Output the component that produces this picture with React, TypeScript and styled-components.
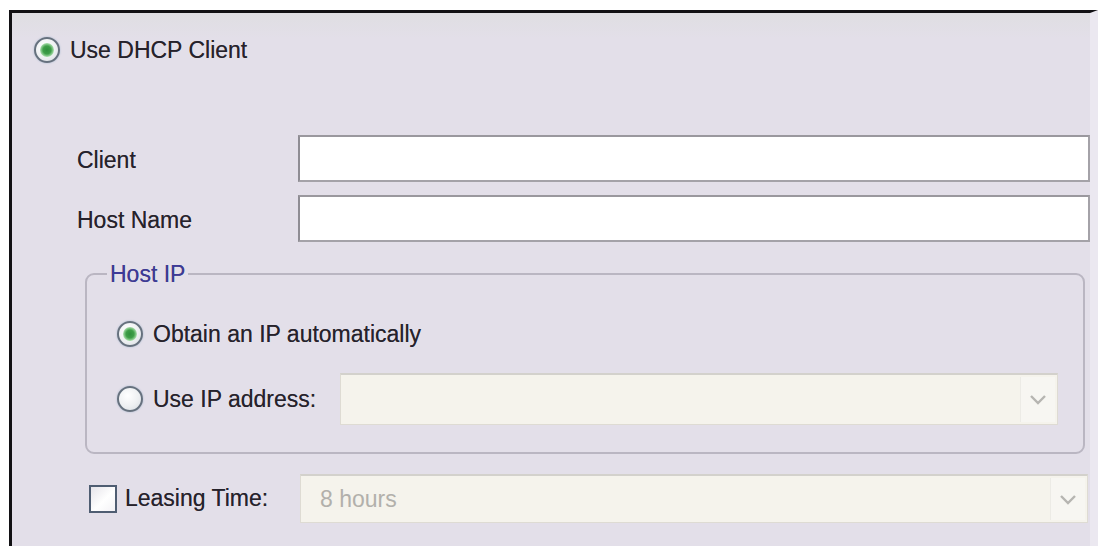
import React from 'react';
import styled, { createGlobalStyle } from 'styled-components';

const textColor = '#26222b';
const panelBackground = '#e3dfe9';
const fieldBorder = '#a4a2a8';
const disabledBackground = '#f5f3ec';

const GlobalStyle = createGlobalStyle`
  html, body {
    margin: 0;
    padding: 0;
    background: #ffffff;
    overflow: hidden;
  }
  body {
    font-family: 'Liberation Sans', Arial, sans-serif;
  }
`;

const Page = styled.div`
  height: 546px;
  padding: 10px 0 0 9px;
  box-sizing: border-box;
`;

const Panel = styled.div`
  height: 100%;
  box-sizing: border-box;
  border-top: 3px solid #121114;
  border-left: 3px solid #121114;
  border-right: 8px solid #ebe8f0;
  background: linear-gradient(#dfdee2 0, #e3dfe9 26px);
  background-color: ${panelBackground};
  display: flex;
  flex-direction: column;
  padding-top: 24px;
  font-size: 23px;
  color: ${textColor};
  text-shadow: 0 0 0.6px rgba(38, 34, 43, 0.6);
`;

const OptionRow = styled.label<{ $indent?: number }>`
  display: flex;
  align-items: center;
  gap: 10px;
  padding-left: ${(p) => p.$indent ?? 0}px;
  line-height: 26px;
`;

const Radio = styled.span<{ $checked?: boolean }>`
  position: relative;
  flex: none;
  width: 26px;
  height: 26px;
  box-sizing: border-box;
  border-radius: 50%;
  border: 2px solid #66717e;
  background: radial-gradient(circle at 40% 35%, #ffffff 0, #eef0f2 55%, #d6dbe0 100%);
  box-shadow: 0 0 2px #9fb4cc;

  &::after {
    content: '';
    display: ${(p) => (p.$checked ? 'block' : 'none')};
    position: absolute;
    left: 4px;
    top: 4px;
    width: 14px;
    height: 14px;
    border-radius: 50%;
    background: radial-gradient(circle, #2f8f3c 0, #3e9f48 40%, #bde9be 75%, #e6f7e6 100%);
  }
`;

const Fields = styled.div`
  display: grid;
  grid-template-columns: 221px 1fr;
  row-gap: 13px;
  align-items: center;
  margin-top: 72px;
  padding-left: 65px;
`;

const FieldLabel = styled.span`
  padding-top: 4px;
`;

const TextInput = styled.div`
  height: 47px;
  box-sizing: border-box;
  background: #ffffff;
  border: 2px solid ${fieldBorder};
  border-top-color: #9a989e;
  border-left-color: #8f8d94;
`;

const GroupBox = styled.fieldset`
  margin: 19px 5px 0 73px;
  padding: 0;
  border: 2px solid #bab6c2;
  border-radius: 9px;
`;

const Legend = styled.legend`
  margin-left: 20px;
  padding: 0 3px;
  line-height: 26px;
  color: #3d3a98;
`;

const GroupBody = styled.div`
  display: flex;
  flex-direction: column;
  gap: 26px;
  padding: 34px 25px 27px 30px;
`;

const Select = styled.div<{ $height: number }>`
  flex: 1;
  display: flex;
  align-items: center;
  height: ${(p) => p.$height}px;
  box-sizing: border-box;
  background: ${disabledBackground};
  border: 1px solid #dedbd3;
  border-top: 2px solid #d3d1cc;
  color: #b2b0ab;
  text-shadow: none;
`;

const SelectValue = styled.span`
  flex: 1;
  padding-left: 19px;
`;

const ArrowButton = styled.span`
  flex: none;
  align-self: stretch;
  width: 34px;
  margin: 2px 2px 2px 0;
  display: flex;
  align-items: center;
  justify-content: center;
  background: #f7f6f2;
  border-left: 1px solid #ecebe6;
`;

const AddressLabel = styled.span`
  margin-right: 14px;
`;

const LeaseRow = styled.div`
  display: flex;
  align-items: center;
  margin: 20px 2px 0 77px;
`;

const CheckOption = styled.label`
  flex: none;
  width: 211px;
  display: flex;
  align-items: center;
  gap: 8px;
`;

const CheckBox = styled.span`
  flex: none;
  width: 28px;
  height: 28px;
  box-sizing: border-box;
  border: 2px solid #4f5d72;
  background: linear-gradient(135deg, #e6e4ea 0, #ffffff 55%, #f3f2f6 100%);
`;

const Chevron: React.FC = () => (
  <svg width="18" height="11" viewBox="0 0 18 11">
    <polyline points="2,2 9,9 16,2" fill="none" stroke="#b6b5b1" strokeWidth="2.4" />
  </svg>
);

const App: React.FC = () => (
  <Page>
    <GlobalStyle />
    <Panel>
      <OptionRow $indent={22}>
        <Radio $checked />
        Use DHCP Client
      </OptionRow>

      <Fields>
        <FieldLabel>Client</FieldLabel>
        <TextInput />
        <FieldLabel>Host Name</FieldLabel>
        <TextInput />
      </Fields>

      <GroupBox>
        <Legend>Host IP</Legend>
        <GroupBody>
          <OptionRow>
            <Radio $checked />
            Obtain an IP automatically
          </OptionRow>
          <OptionRow>
            <Radio />
            <AddressLabel>Use IP address:</AddressLabel>
            <Select $height={52}>
              <SelectValue />
              <ArrowButton>
                <Chevron />
              </ArrowButton>
            </Select>
          </OptionRow>
        </GroupBody>
      </GroupBox>

      <LeaseRow>
        <CheckOption>
          <CheckBox />
          Leasing Time:
        </CheckOption>
        <Select $height={49}>
          <SelectValue>8 hours</SelectValue>
          <ArrowButton>
            <Chevron />
          </ArrowButton>
        </Select>
      </LeaseRow>
    </Panel>
  </Page>
);

export default App;
